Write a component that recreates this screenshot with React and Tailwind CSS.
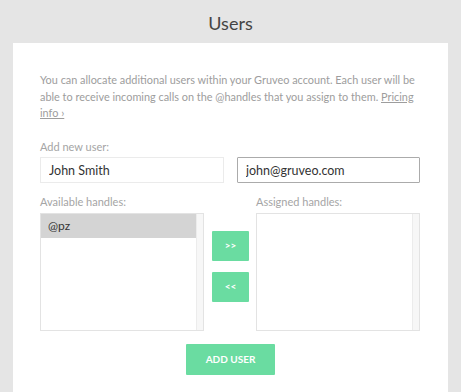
import { useState } from "react";

const font = { fontFamily: '"Lato", "Open Sans", sans-serif' };

const HandleList = ({ items, selected }) => (
  <div className="flex h-[118px] w-[164px] border border-[#e3e3e3] bg-white">
    <div className="flex-1">
      {items.map((h) => (
        <div
          key={h}
          className={`h-[24px] pl-[7px] flex items-center text-[12px] text-[#333] ${
            h === selected ? "bg-[#d4d4d4]" : ""
          }`}
        >
          {h}
        </div>
      ))}
    </div>
    <div className="w-[7px] border-l border-[#ececec] bg-[#f7f7f7]" />
  </div>
);

export default function App() {
  const [name, setName] = useState("John Smith");
  const [email, setEmail] = useState("john@gruveo.com");

  return (
    <div
      className="h-[392px] w-[461px] bg-[#e5e5e5] flex flex-col overflow-hidden"
      style={font}
    >
      <div className="h-[43px] pt-[3px] flex items-center justify-center text-[18px] text-[#444]">
        Users
      </div>
      <div className="flex-1 mx-[13px] bg-white px-[27px] pt-[29px]">
        <p className="text-[10.9px] leading-[16.5px] text-[#9d9d9d]">
          You can allocate additional users within your Gruveo account. Each
          user will be able to receive incoming calls on the @handles that you
          assign to them. <a href="#" className="underline">Pricing info ›</a>
        </p>

        <div className="mt-[17px] text-[11px] text-[#a5a5a5]">Add new user:</div>
        <div className="mt-[2px] flex gap-[13px]">
          <input
            value={name}
            onChange={(e) => setName(e.target.value)}
            className="h-[26px] w-[184px] border border-[#ebebeb] px-[8px] text-[12.5px] text-[#333] outline-none"
          />
          <input
            value={email}
            onChange={(e) => setEmail(e.target.value)}
            className="h-[26px] w-[183px] border border-[#ababab] rounded-[1px] px-[8px] text-[12.5px] text-[#333] outline-none"
          />
        </div>

        <div className="mt-[11px] flex text-[11px] text-[#a5a5a5]">
          <div className="w-[216px]">Available handles:</div>
          <div>Assigned handles:</div>
        </div>
        <div className="mt-[2px] flex">
          <HandleList items={["@pz"]} selected="@pz" />
          <div className="ml-[8px] w-[37px] pt-[18px] flex flex-col gap-[11px]">
            <button className="h-[30px] bg-[#6adca1] text-white text-[10px] font-bold rounded-[1px]">
              &gt;&gt;
            </button>
            <button className="h-[30px] bg-[#6adca1] text-white text-[10px] font-bold rounded-[1px]">
              &lt;&lt;
            </button>
          </div>
          <div className="ml-[7px]">
            <HandleList items={[]} />
          </div>
        </div>

        <div className="mt-[13px] flex justify-center">
          <button className="h-[31px] w-[89px] bg-[#6adca1] text-white text-[10px] font-bold rounded-[1px]">
            ADD USER
          </button>
        </div>
      </div>
    </div>
  );
}
